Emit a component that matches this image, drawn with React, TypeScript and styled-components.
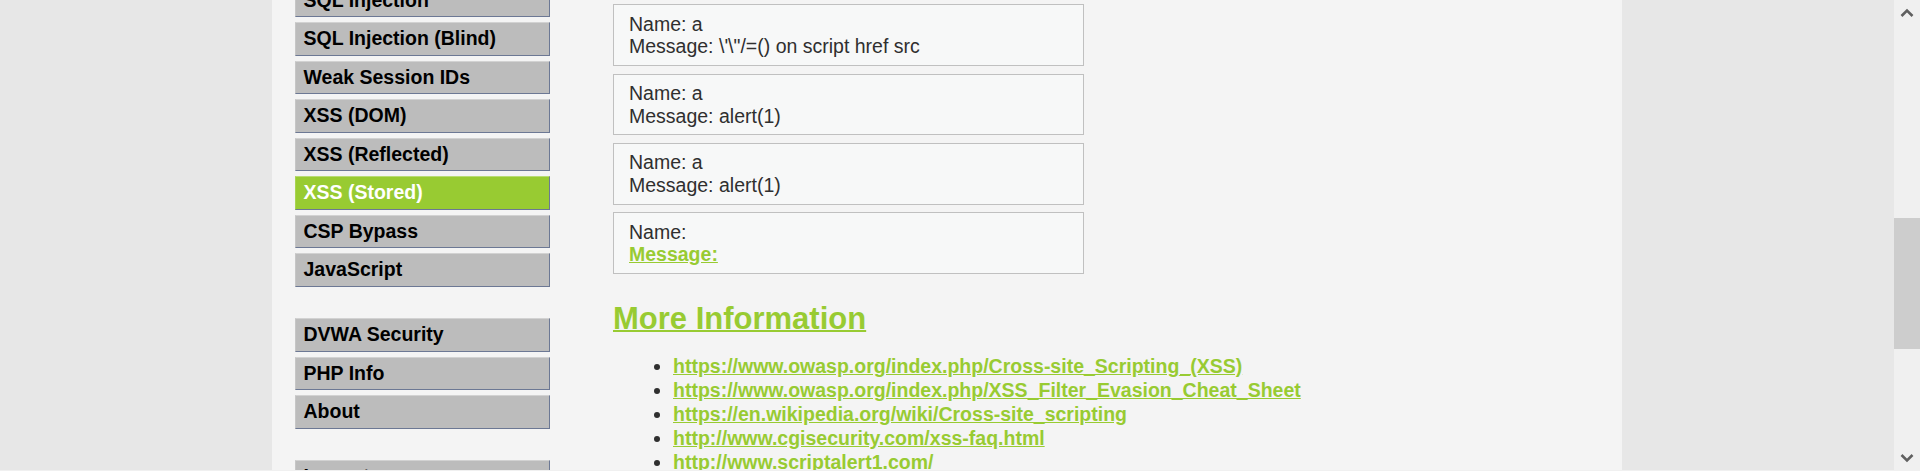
import React from 'react';
import styled, { createGlobalStyle } from 'styled-components';

const Global = createGlobalStyle`
  html, body { margin: 0; padding: 0; }
  body {
    background: #e7e7e7;
    font-family: "Liberation Sans", Arial, sans-serif;
    overflow: hidden;
  }
`;

const Screen = styled.div`
  width: 1920px;
  height: 471px;
  display: flex;
  flex-direction: column;
  overflow: hidden;
`;

const Frame = styled.div`
  display: flex;
  height: 470px;
`;

const BottomEdge = styled.div`
  height: 1px;
  background: #f0f0f0;
`;

const Viewport = styled.div`
  flex: 1;
  overflow: hidden;
  background: #e7e7e7;
`;

const Container = styled.div`
  margin-left: 272px;
  width: 1350px;
  height: 100%;
  background: #f4f4f4;
  display: flex;
  align-items: flex-start;
`;

const Menu = styled.div`
  flex: none;
  width: 255px;
  margin: -16.5px 0 0 23px;
`;

const MenuGroup = styled.ul`
  list-style: none;
  margin: 0 0 31.5px 0;
  padding: 0;
`;

const MenuItem = styled.li<{ $active?: boolean }>`
  box-sizing: border-box;
  height: 33.5px;
  margin-bottom: 5px;
  padding-left: 7.5px;
  display: flex;
  align-items: center;
  background: ${p => (p.$active ? '#98cb32' : '#bcbcbc')};
  color: ${p => (p.$active ? '#ffffff' : '#000000')};
  border-top: 1px solid ${p => (p.$active ? '#b9dc74' : '#d2d2d2')};
  border-left: 1px solid ${p => (p.$active ? '#a8d350' : '#c6c6c6')};
  border-right: 1px solid #6c7894;
  border-bottom: 1px solid #6c7894;
  font-size: 19.5px;
  font-weight: bold;
  white-space: nowrap;
`;

const Body = styled.div`
  flex: none;
  margin-left: 63px;
  padding-top: 4.3px;
  width: 900px;
  color: #2f2f2f;
  font-size: 19.5px;
`;

const Comment = styled.div`
  box-sizing: border-box;
  width: 471px;
  border: 1px solid #c0c0c0;
  background: #f7f8f8;
  padding: 7.5px 15px;
  margin-bottom: 7.5px;
  line-height: 22.4px;
`;

const InjectedLink = styled.span`
  color: #98cb32;
  font-weight: bold;
  text-decoration: underline;
`;

const Heading = styled.h2`
  margin: 27px 0 0 0;
  font-size: 31px;
  line-height: 35.6px;
  font-weight: bold;
  color: #98cb32;
  text-decoration: underline;
  text-decoration-thickness: 2px;
`;

const Links = styled.ul`
  margin: 18.5px 0 0 0;
  padding-left: 60px;
  list-style: disc outside;
  color: #2f2f2f;
`;

const LinkItem = styled.li`
  line-height: 23.9px;
  font-size: 19.5px;
`;

const Link = styled.a`
  color: #98cb32;
  font-weight: bold;
  text-decoration: underline;
`;

const Scrollbar = styled.div`
  flex: none;
  width: 26px;
  background: #f0f0f0;
  display: flex;
  flex-direction: column;
`;

const ArrowButton = styled.div`
  height: 25px;
  display: flex;
  align-items: center;
  justify-content: center;
`;

const Track = styled.div`
  flex: 1;
`;

const Thumb = styled.div<{ $top: number; $height: number }>`
  margin-top: ${p => p.$top}px;
  height: ${p => p.$height}px;
  background: #cdcdcd;
`;

const Chevron = ({ up }: { up?: boolean }) => (
  <svg width="14" height="10" viewBox="0 0 14 10">
    <polyline
      points={up ? '1.5,8 7,2.5 12.5,8' : '1.5,2 7,7.5 12.5,2'}
      fill="none"
      stroke="#606060"
      strokeWidth="2.6"
    />
  </svg>
);

const group1 = [
  'SQL Injection',
  'SQL Injection (Blind)',
  'Weak Session IDs',
  'XSS (DOM)',
  'XSS (Reflected)',
  'XSS (Stored)',
  'CSP Bypass',
  'JavaScript',
];
const group2 = ['DVWA Security', 'PHP Info', 'About'];
const group3 = ['Logout'];

const comments = [
  { name: 'a', message: '\\\'\\"/=() on script href src' },
  { name: 'a', message: 'alert(1)' },
  { name: 'a', message: 'alert(1)' },
];

const links = [
  'https://www.owasp.org/index.php/Cross-site_Scripting_(XSS)',
  'https://www.owasp.org/index.php/XSS_Filter_Evasion_Cheat_Sheet',
  'https://en.wikipedia.org/wiki/Cross-site_scripting',
  'http://www.cgisecurity.com/xss-faq.html',
  'http://www.scriptalert1.com/',
];

export default function App() {
  return (
    <Screen>
      <Global />
      <Frame>
        <Viewport>
          <Container>
            <Menu>
              {[group1, group2, group3].map((g, gi) => (
                <MenuGroup key={gi}>
                  {g.map(item => (
                    <MenuItem key={item} $active={item === 'XSS (Stored)'}>
                      {item}
                    </MenuItem>
                  ))}
                </MenuGroup>
              ))}
            </Menu>
            <Body>
              {comments.map((c, i) => (
                <Comment key={i}>
                  Name: {c.name}
                  <br />
                  Message: {c.message}
                </Comment>
              ))}
              <Comment>
                Name:
                <br />
                <InjectedLink>Message:</InjectedLink>
              </Comment>
              <Heading>More Information</Heading>
              <Links>
                {links.map(l => (
                  <LinkItem key={l}>
                    <Link href="#">{l}</Link>
                  </LinkItem>
                ))}
              </Links>
            </Body>
          </Container>
        </Viewport>
        <Scrollbar>
          <ArrowButton>
            <Chevron up />
          </ArrowButton>
          <Track>
            <Thumb $top={193} $height={131} />
          </Track>
          <ArrowButton>
            <Chevron />
          </ArrowButton>
        </Scrollbar>
      </Frame>
      <BottomEdge />
    </Screen>
  );
}
